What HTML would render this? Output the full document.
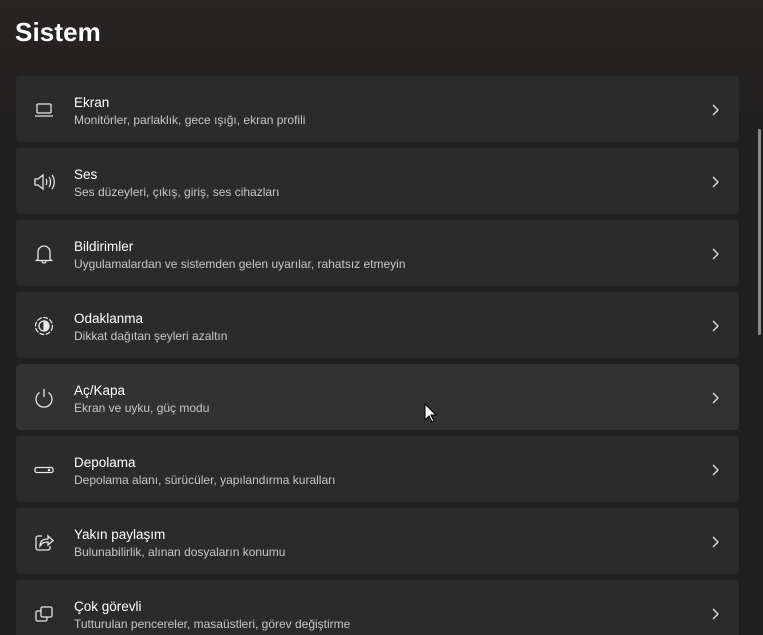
<!DOCTYPE html>
<html><head><meta charset="utf-8"><style>
*{margin:0;padding:0;box-sizing:border-box}
html,body{width:763px;height:635px;overflow:hidden}
body{background:linear-gradient(180deg,#272422 0,#212020 120px,#202020 100%);font-family:"Segoe UI","Liberation Sans",sans-serif;color:#fff;position:relative}
h1{position:absolute;left:15px;top:17px;font-size:26px;font-weight:600;letter-spacing:0.1px}
.card{position:absolute;left:16px;width:723px;height:66px;background:#2b2b2b;border-radius:4px}
.card.h{background:#323232}
.ic{position:absolute;left:16px;top:22px;width:24px;height:24px}
.t{position:absolute;left:58px;top:19px;font-size:13.5px;color:#fff}
.s{position:absolute;left:58px;top:37px;font-size:12px;color:#c8c8c8}
.ch{position:absolute;left:694px;top:27px}
.sb{position:absolute;left:758px;top:129px;width:3px;height:206px;background:#8a8a8a;border-radius:2px}
svg{stroke:#e6e6e6;fill:none;stroke-width:1.3}
</style></head><body>
<h1>Sistem</h1>
<div class="sb"></div>

<div class="card" style="top:76px"><svg class="ic" viewBox="0 0 24 24"><rect x="5" y="6" width="14" height="9" rx="1"/><path d="M3 18h18"/></svg><div class="t">Ekran</div><div class="s">Monitörler, parlaklık, gece ışığı, ekran profili</div><svg class="ch" width="10" height="14" viewBox="0 0 10 14"><path d="M3 2l5 5-5 5"/></svg></div>

<div class="card" style="top:148px"><svg class="ic" viewBox="0 0 24 24"><path d="M3 9h3l5-4v14l-5-4H3z"/><path d="M14 9c1 1.5 1 4.5 0 6M17 7c2 2.5 2 7.5 0 10M20 5c3 4 3 10 0 14"/></svg><div class="t">Ses</div><div class="s">Ses düzeyleri, çıkış, giriş, ses cihazları</div><svg class="ch" width="10" height="14" viewBox="0 0 10 14"><path d="M3 2l5 5-5 5"/></svg></div>

<div class="card" style="top:220px"><svg class="ic" viewBox="0 0 24 24"><path d="M6 17V10a6 6 0 0112 0v7l1.5 1.5h-15z"/><path d="M10 19a2 2 0 004 0"/></svg><div class="t">Bildirimler</div><div class="s">Uygulamalardan ve sistemden gelen uyarılar, rahatsız etmeyin</div><svg class="ch" width="10" height="14" viewBox="0 0 10 14"><path d="M3 2l5 5-5 5"/></svg></div>

<div class="card" style="top:292px"><svg class="ic" viewBox="0 0 24 24"><circle cx="12" cy="12" r="8.5" stroke-dasharray="5 1.5"/><circle cx="12" cy="12" r="5"/><path d="M12 7a5 5 0 010 10z" fill="#e6e6e6"/></svg><div class="t">Odaklanma</div><div class="s">Dikkat dağıtan şeyleri azaltın</div><svg class="ch" width="10" height="14" viewBox="0 0 10 14"><path d="M3 2l5 5-5 5"/></svg></div>

<div class="card h" style="top:364px"><svg class="ic" viewBox="0 0 24 24"><path d="M12 3v8"/><path d="M7.5 6.5a8 8 0 109 0"/></svg><div class="t">Aç/Kapa</div><div class="s">Ekran ve uyku, güç modu</div><svg class="ch" width="10" height="14" viewBox="0 0 10 14"><path d="M3 2l5 5-5 5"/></svg></div>

<div class="card" style="top:436px"><svg class="ic" viewBox="0 0 24 24"><rect x="3" y="9.5" width="18" height="5" rx="1.5"/><circle cx="17" cy="12" r="0.6" fill="#e6e6e6"/></svg><div class="t">Depolama</div><div class="s">Depolama alanı, sürücüler, yapılandırma kuralları</div><svg class="ch" width="10" height="14" viewBox="0 0 10 14"><path d="M3 2l5 5-5 5"/></svg></div>

<div class="card" style="top:508px"><svg class="ic" viewBox="0 0 24 24"><path d="M10 6H6a2 2 0 00-2 2v10a2 2 0 002 2h10a2 2 0 002-2v-2"/><path d="M8 16c0-5 3-7 8-7V6l5 4.5-5 4.5v-3c-4 0-6 1-8 4z"/></svg><div class="t">Yakın paylaşım</div><div class="s">Bulunabilirlik, alınan dosyaların konumu</div><svg class="ch" width="10" height="14" viewBox="0 0 10 14"><path d="M3 2l5 5-5 5"/></svg></div>

<div class="card" style="top:580px"><svg class="ic" viewBox="0 0 24 24"><rect x="9" y="5" width="11" height="10" rx="1.5"/><path d="M9 9H5.5A1.5 1.5 0 004 10.5v7A1.5 1.5 0 005.5 19h8a1.5 1.5 0 001.5-1.5V15"/></svg><div class="t">Çok görevli</div><div class="s">Tutturulan pencereler, masaüstleri, görev değiştirme</div><svg class="ch" width="10" height="14" viewBox="0 0 10 14"><path d="M3 2l5 5-5 5"/></svg></div>

<svg style="position:absolute;left:424px;top:403px" width="14" height="22" viewBox="0 0 14 22"><path d="M1 1v16l4-4 3 6 2-1-3-6h5z" fill="#fff" stroke="#000" stroke-width="1"/></svg>
</body></html>
